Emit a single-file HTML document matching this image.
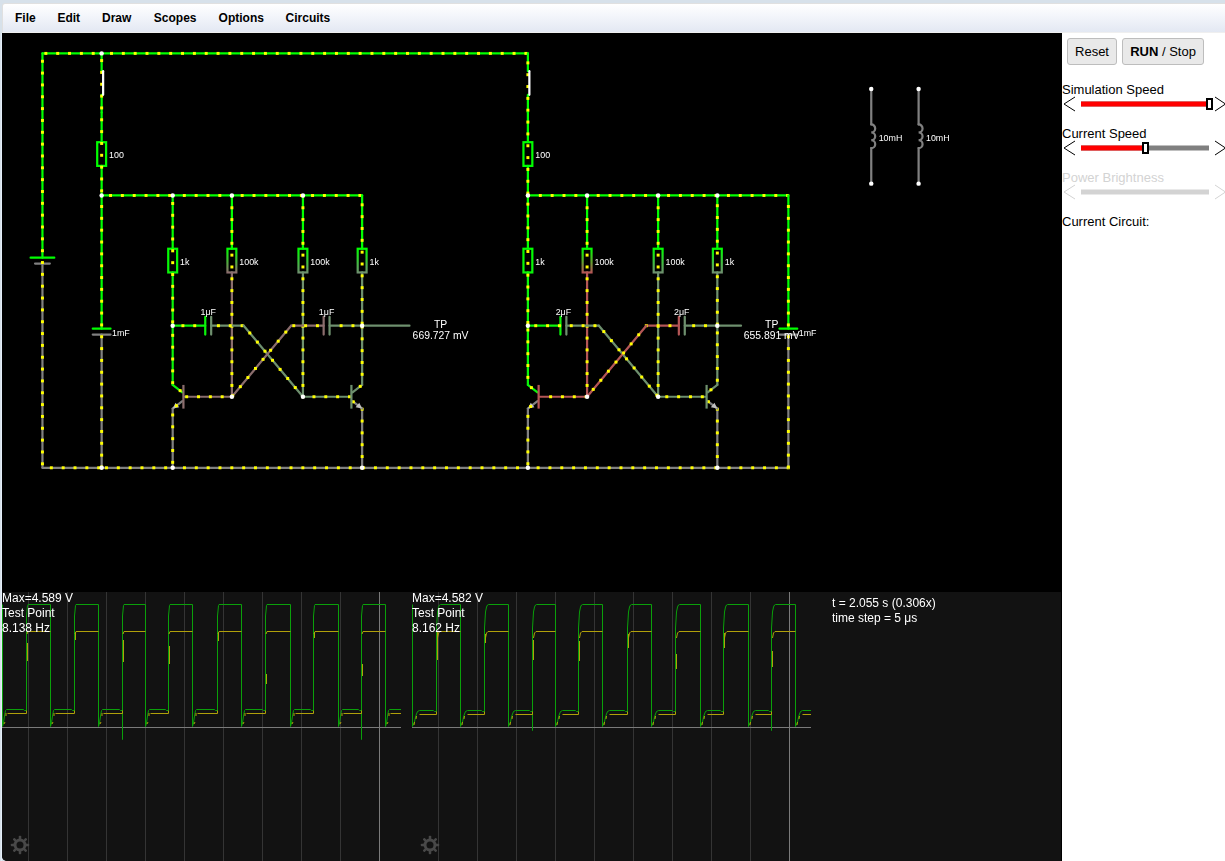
<!DOCTYPE html>
<html><head><meta charset="utf-8"><title>Circuit Simulator</title>
<style>
html,body{margin:0;padding:0}
body{width:1225px;height:861px;overflow:hidden;background:#d7e1ea;position:relative;font-family:"Liberation Sans",sans-serif;font-size:13px;color:#000}
#menubar{position:absolute;left:2px;top:3px;width:1230px;height:28px;border:1px solid #e0e0e0;border-bottom-color:#efefef;border-radius:3px 0 0 0;background:linear-gradient(#ffffff 0%,#f4f6fb 40%,#e3e8f3 100%);box-sizing:content-box}
#menubar span{position:absolute;top:0;line-height:28px;font-weight:bold;font-size:12px;white-space:nowrap}
#cv{position:absolute;left:2px;top:33px;width:1060px;height:828px;background:#000;border-radius:0 0 0 5px;overflow:hidden}
#scopebg{position:absolute;left:0;top:559px;width:1059px;height:269px;background:#121212}
#cv svg{position:absolute;left:0;top:0;will-change:transform}
#side{position:absolute;left:1062px;top:33px;width:163px;height:828px;background:#fff}
.btn{position:absolute;top:5px;height:27px;box-sizing:border-box;border:1px solid #bdbdbd;border-radius:3px;background:#e9e9e9;font-size:13px;line-height:25px;text-align:center;white-space:nowrap}
.lbl{position:absolute;left:0;white-space:nowrap;font-size:13px;line-height:15px}
#side svg{position:absolute;left:0;top:0}
</style></head><body>
<div id="menubar">
<span style="left:12px">File</span><span style="left:54.4px">Edit</span><span style="left:99px">Draw</span><span style="left:150.8px">Scopes</span><span style="left:215.6px">Options</span><span style="left:282.6px">Circuits</span>
</div>
<div style="position:absolute;left:1px;top:33px;width:1px;height:828px;background:#e4eef9"></div>
<div id="cv"><div id="scopebg"></div>
<svg width="1060" height="828" viewBox="2 33 1060 828">
<line x1="28.5" y1="592" x2="28.5" y2="861" stroke="#343434" stroke-width="1"/>
<line x1="67.5" y1="592" x2="67.5" y2="861" stroke="#343434" stroke-width="1"/>
<line x1="106.5" y1="592" x2="106.5" y2="861" stroke="#343434" stroke-width="1"/>
<line x1="145.5" y1="592" x2="145.5" y2="861" stroke="#343434" stroke-width="1"/>
<line x1="184.5" y1="592" x2="184.5" y2="861" stroke="#343434" stroke-width="1"/>
<line x1="223.5" y1="592" x2="223.5" y2="861" stroke="#343434" stroke-width="1"/>
<line x1="262.5" y1="592" x2="262.5" y2="861" stroke="#343434" stroke-width="1"/>
<line x1="301.5" y1="592" x2="301.5" y2="861" stroke="#343434" stroke-width="1"/>
<line x1="340.5" y1="592" x2="340.5" y2="861" stroke="#343434" stroke-width="1"/>
<line x1="379.5" y1="592" x2="379.5" y2="861" stroke="#7a7a7a" stroke-width="1"/>
<line x1="2" y1="727.5" x2="401" y2="727.5" stroke="#7a7a7a" stroke-width="1"/>
<path d="M2.5 604.5 L2.5 726.5 L3.5 723 L4.5 716 L5.5 710.5 L6.5 709.5 L23.5 709.5 L24.5 710.5 L26.5 710.5 L26.5 616 L27.5 605.5 L28 604.5 L50.5 604.5 L50.5 726.5 L51.5 723 L52.5 716 L53.5 710.5 L54.5 709.5 L71.5 709.5 L72.5 710.5 L74.5 710.5 L74.5 616 L75.5 605.5 L76 604.5 L98.5 604.5 L98.5 726.5 L99.5 723 L100.5 716 L101.5 710.5 L102.5 709.5 L119.5 709.5 L120.5 710.5 L122.5 710.5 L122.5 739.5 L122.5 616 L123.5 605.5 L124 604.5 L145.5 604.5 L145.5 726.5 L146.5 723 L147.5 716 L148.5 710.5 L149.5 709.5 L165.5 709.5 L166.5 710.5 L168.5 710.5 L168.5 616 L169.5 605.5 L170 604.5 L192.5 604.5 L192.5 726.5 L193.5 723 L194.5 716 L195.5 710.5 L196.5 709.5 L214.5 709.5 L215.5 710.5 L217.5 710.5 L217.5 616 L218.5 605.5 L219 604.5 L241.5 604.5 L241.5 726.5 L242.5 723 L243.5 716 L244.5 710.5 L245.5 709.5 L262.5 709.5 L263.5 710.5 L265.5 710.5 L265.5 616 L266.5 605.5 L267 604.5 L290.5 604.5 L290.5 726.5 L291.5 723 L292.5 716 L293.5 710.5 L294.5 709.5 L310.5 709.5 L311.5 710.5 L313.5 710.5 L313.5 616 L314.5 605.5 L315 604.5 L338.5 604.5 L338.5 726.5 L339.5 723 L340.5 716 L341.5 710.5 L342.5 709.5 L358.5 709.5 L359.5 710.5 L361.5 710.5 L361.5 739.5 L361.5 616 L362.5 605.5 L363 604.5 L385.5 604.5 L385.5 726.5 L386.5 723 L387.5 716 L388.5 710.5 L389.5 709.5 L401 709.5" fill="none" stroke="#0aa00a" stroke-width="1" stroke-linejoin="round"/>
<path d="M4 724 L5 722 M6 716 L6 713 M7.5 713.5 L26.5 713.5 M26.5 713.5 L26.5 710.5 M52 724 L53 722 M54 716 L54 713 M55.5 713.5 L74.5 713.5 M74.5 713.5 L74.5 710.5 M100 724 L101 722 M102 716 L102 713 M103.5 713.5 L122.5 713.5 M122.5 713.5 L122.5 710.5 M147 724 L148 722 M149 716 L149 713 M150.5 713.5 L168.5 713.5 M168.5 713.5 L168.5 710.5 M194 724 L195 722 M196 716 L196 713 M197.5 713.5 L217.5 713.5 M217.5 713.5 L217.5 710.5 M243 724 L244 722 M245 716 L245 713 M246.5 713.5 L265.5 713.5 M265.5 713.5 L265.5 710.5 M292 724 L293 722 M294 716 L294 713 M295.5 713.5 L313.5 713.5 M313.5 713.5 L313.5 710.5 M340 724 L341 722 M342 716 L342 713 M343.5 713.5 L361.5 713.5 M361.5 713.5 L361.5 710.5 M387 724 L388 722 M389 716 L389 713 M390.5 713.5 L401 713.5 M27.5 643 L27.5 661 M27 634 L28 631.5 L50.5 631.5 M75.5 632 L75.5 640 M75 634 L76 631.5 L98.5 631.5 M123.5 640 L123.5 662 M123 634 L124 631.5 L145.5 631.5 M169.5 646 L169.5 664 M169 634 L170 631.5 L192.5 631.5 M218.5 632 L218.5 641 M218 634 L219 631.5 L241.5 631.5 M266.5 674 L266.5 684 M266 634 L267 631.5 L290.5 631.5 M314.5 632 L314.5 638 M314 634 L315 631.5 L338.5 631.5 M362.5 664 L362.5 676 M362 634 L363 631.5 L385.5 631.5" fill="none" stroke="#b0a00a" stroke-width="1"/>
<line x1="438.5" y1="592" x2="438.5" y2="861" stroke="#343434" stroke-width="1"/>
<line x1="477.5" y1="592" x2="477.5" y2="861" stroke="#343434" stroke-width="1"/>
<line x1="516.5" y1="592" x2="516.5" y2="861" stroke="#343434" stroke-width="1"/>
<line x1="555.5" y1="592" x2="555.5" y2="861" stroke="#343434" stroke-width="1"/>
<line x1="594.5" y1="592" x2="594.5" y2="861" stroke="#343434" stroke-width="1"/>
<line x1="633.5" y1="592" x2="633.5" y2="861" stroke="#343434" stroke-width="1"/>
<line x1="672.5" y1="592" x2="672.5" y2="861" stroke="#343434" stroke-width="1"/>
<line x1="711.5" y1="592" x2="711.5" y2="861" stroke="#343434" stroke-width="1"/>
<line x1="750.5" y1="592" x2="750.5" y2="861" stroke="#343434" stroke-width="1"/>
<line x1="789.5" y1="592" x2="789.5" y2="861" stroke="#7a7a7a" stroke-width="1"/>
<line x1="412" y1="727.5" x2="811" y2="727.5" stroke="#7a7a7a" stroke-width="1"/>
<path d="M412.5 604.5 L412.5 726.5 L413.5 724 L414.5 722 L415.5 717 L416.5 714 L417.5 711.5 L419.5 710.5 L433.5 710.5 L434.5 711.5 L436.5 711.5 L436.5 628 L437.5 612 L438.5 607 L439.5 605 L440.5 604.5 L460.5 604.5 L460.5 726.5 L461.5 724 L462.5 722 L463.5 717 L464.5 714 L465.5 711.5 L467.5 710.5 L481.5 710.5 L482.5 711.5 L484.5 711.5 L484.5 628 L485.5 612 L486.5 607 L487.5 605 L488.5 604.5 L508.5 604.5 L508.5 726.5 L509.5 724 L510.5 722 L511.5 717 L512.5 714 L513.5 711.5 L515.5 710.5 L529.5 710.5 L530.5 711.5 L532.5 711.5 L532.5 730.5 L532.5 628 L533.5 612 L534.5 607 L535.5 605 L536.5 604.5 L555.5 604.5 L555.5 726.5 L556.5 724 L557.5 722 L558.5 717 L559.5 714 L560.5 711.5 L562.5 710.5 L575.5 710.5 L576.5 711.5 L578.5 711.5 L578.5 628 L579.5 612 L580.5 607 L581.5 605 L582.5 604.5 L602.5 604.5 L602.5 726.5 L603.5 724 L604.5 722 L605.5 717 L606.5 714 L607.5 711.5 L609.5 710.5 L624.5 710.5 L625.5 711.5 L627.5 711.5 L627.5 628 L628.5 612 L629.5 607 L630.5 605 L631.5 604.5 L651.5 604.5 L651.5 726.5 L652.5 724 L653.5 722 L654.5 717 L655.5 714 L656.5 711.5 L658.5 710.5 L672.5 710.5 L673.5 711.5 L675.5 711.5 L675.5 628 L676.5 612 L677.5 607 L678.5 605 L679.5 604.5 L700.5 604.5 L700.5 726.5 L701.5 724 L702.5 722 L703.5 717 L704.5 714 L705.5 711.5 L707.5 710.5 L720.5 710.5 L721.5 711.5 L723.5 711.5 L723.5 628 L724.5 612 L725.5 607 L726.5 605 L727.5 604.5 L748.5 604.5 L748.5 726.5 L749.5 724 L750.5 722 L751.5 717 L752.5 714 L753.5 711.5 L755.5 710.5 L768.5 710.5 L769.5 711.5 L771.5 711.5 L771.5 730.5 L771.5 628 L772.5 612 L773.5 607 L774.5 605 L775.5 604.5 L795.5 604.5 L795.5 726.5 L796.5 724 L797.5 722 L798.5 717 L799.5 714 L800.5 711.5 L802.5 710.5 L811 710.5" fill="none" stroke="#0aa00a" stroke-width="1" stroke-linejoin="round"/>
<path d="M414 725 L414.5 722 M416 719 L416.5 716 M419.5 714.5 L436.5 714.5 M436.5 714.5 L436.5 711.5 M462 725 L462.5 722 M464 719 L464.5 716 M467.5 714.5 L484.5 714.5 M484.5 714.5 L484.5 711.5 M510 725 L510.5 722 M512 719 L512.5 716 M515.5 714.5 L532.5 714.5 M532.5 714.5 L532.5 711.5 M557 725 L557.5 722 M559 719 L559.5 716 M562.5 714.5 L578.5 714.5 M578.5 714.5 L578.5 711.5 M604 725 L604.5 722 M606 719 L606.5 716 M609.5 714.5 L627.5 714.5 M627.5 714.5 L627.5 711.5 M653 725 L653.5 722 M655 719 L655.5 716 M658.5 714.5 L675.5 714.5 M675.5 714.5 L675.5 711.5 M702 725 L702.5 722 M704 719 L704.5 716 M707.5 714.5 L723.5 714.5 M723.5 714.5 L723.5 711.5 M750 725 L750.5 722 M752 719 L752.5 716 M755.5 714.5 L771.5 714.5 M771.5 714.5 L771.5 711.5 M797 725 L797.5 722 M799 719 L799.5 716 M802.5 714.5 L811 714.5 M437.5 632 L437.5 660 M437.5 638 L438.5 633 L440 631.5 L460.5 631.5 M485.5 634 L485.5 643 M485.5 638 L486.5 633 L488 631.5 L508.5 631.5 M533.5 640 L533.5 660 M533.5 638 L534.5 633 L536 631.5 L555.5 631.5 M579.5 641 L579.5 661 M579.5 638 L580.5 633 L582 631.5 L602.5 631.5 M628.5 634 L628.5 648 M628.5 638 L629.5 633 L631 631.5 L651.5 631.5 M676.5 654 L676.5 669 M676.5 638 L677.5 633 L679 631.5 L700.5 631.5 M724.5 633 L724.5 648 M724.5 638 L725.5 633 L727 631.5 L748.5 631.5 M772.5 651 L772.5 667 M772.5 638 L773.5 633 L775 631.5 L795.5 631.5" fill="none" stroke="#b0a00a" stroke-width="1"/>
<g transform="translate(20,845)" fill="#484848">
<rect x="-1.25" y="-9.2" width="2.5" height="4.4" rx="0.8" transform="rotate(0)"/>
<rect x="-1.25" y="-9.2" width="2.5" height="4.4" rx="0.8" transform="rotate(45)"/>
<rect x="-1.25" y="-9.2" width="2.5" height="4.4" rx="0.8" transform="rotate(90)"/>
<rect x="-1.25" y="-9.2" width="2.5" height="4.4" rx="0.8" transform="rotate(135)"/>
<rect x="-1.25" y="-9.2" width="2.5" height="4.4" rx="0.8" transform="rotate(180)"/>
<rect x="-1.25" y="-9.2" width="2.5" height="4.4" rx="0.8" transform="rotate(225)"/>
<rect x="-1.25" y="-9.2" width="2.5" height="4.4" rx="0.8" transform="rotate(270)"/>
<rect x="-1.25" y="-9.2" width="2.5" height="4.4" rx="0.8" transform="rotate(315)"/>
<circle r="5" fill="none" stroke="#484848" stroke-width="3"/>
</g>
<g transform="translate(430,845)" fill="#484848">
<rect x="-1.25" y="-9.2" width="2.5" height="4.4" rx="0.8" transform="rotate(0)"/>
<rect x="-1.25" y="-9.2" width="2.5" height="4.4" rx="0.8" transform="rotate(45)"/>
<rect x="-1.25" y="-9.2" width="2.5" height="4.4" rx="0.8" transform="rotate(90)"/>
<rect x="-1.25" y="-9.2" width="2.5" height="4.4" rx="0.8" transform="rotate(135)"/>
<rect x="-1.25" y="-9.2" width="2.5" height="4.4" rx="0.8" transform="rotate(180)"/>
<rect x="-1.25" y="-9.2" width="2.5" height="4.4" rx="0.8" transform="rotate(225)"/>
<rect x="-1.25" y="-9.2" width="2.5" height="4.4" rx="0.8" transform="rotate(270)"/>
<rect x="-1.25" y="-9.2" width="2.5" height="4.4" rx="0.8" transform="rotate(315)"/>
<circle r="5" fill="none" stroke="#484848" stroke-width="3"/>
</g>
<g fill="#fff" font-family="'Liberation Sans',sans-serif" font-size="12">
<text x="2" y="602">Max=4.589 V</text>
<text x="2" y="617">Test Point</text>
<text x="2" y="632">8.138 Hz</text>
<text x="412" y="602">Max=4.582 V</text>
<text x="412" y="617">Test Point</text>
<text x="412" y="632">8.162 Hz</text>
<text x="832" y="607">t = 2.055 s (0.306x)</text>
<text x="832" y="622">time step = 5 μs</text>
</g>
<g transform="translate(42.45,53.4) scale(0.74)">
<line x1="0" y1="560" x2="0" y2="284" stroke="#808080" stroke-width="3" stroke-linecap="round"/>
<line x1="0" y1="276" x2="0" y2="0" stroke="#00ff00" stroke-width="3" stroke-linecap="round"/>
<line x1="-10" y1="284" x2="10" y2="284" stroke="#808080" stroke-width="3" stroke-linecap="round"/>
<line x1="-16" y1="276" x2="16" y2="276" stroke="#00ff00" stroke-width="3" stroke-linecap="round"/>
<rect x="-2" y="8.6" width="4" height="4" fill="#ffff00"/>
<rect x="-2" y="24.6" width="4" height="4" fill="#ffff00"/>
<rect x="-2" y="40.6" width="4" height="4" fill="#ffff00"/>
<rect x="-2" y="56.6" width="4" height="4" fill="#ffff00"/>
<rect x="-2" y="72.6" width="4" height="4" fill="#ffff00"/>
<rect x="-2" y="88.6" width="4" height="4" fill="#ffff00"/>
<rect x="-2" y="104.6" width="4" height="4" fill="#ffff00"/>
<rect x="-2" y="120.6" width="4" height="4" fill="#ffff00"/>
<rect x="-2" y="136.6" width="4" height="4" fill="#ffff00"/>
<rect x="-2" y="152.6" width="4" height="4" fill="#ffff00"/>
<rect x="-2" y="168.6" width="4" height="4" fill="#ffff00"/>
<rect x="-2" y="184.6" width="4" height="4" fill="#ffff00"/>
<rect x="-2" y="200.6" width="4" height="4" fill="#ffff00"/>
<rect x="-2" y="216.6" width="4" height="4" fill="#ffff00"/>
<rect x="-2" y="232.6" width="4" height="4" fill="#ffff00"/>
<rect x="-2" y="248.6" width="4" height="4" fill="#ffff00"/>
<rect x="-2" y="264.6" width="4" height="4" fill="#ffff00"/>
<rect x="-2" y="280.6" width="4" height="4" fill="#ffff00"/>
<rect x="-2" y="296.6" width="4" height="4" fill="#ffff00"/>
<rect x="-2" y="312.6" width="4" height="4" fill="#ffff00"/>
<rect x="-2" y="328.6" width="4" height="4" fill="#ffff00"/>
<rect x="-2" y="344.6" width="4" height="4" fill="#ffff00"/>
<rect x="-2" y="360.6" width="4" height="4" fill="#ffff00"/>
<rect x="-2" y="376.6" width="4" height="4" fill="#ffff00"/>
<rect x="-2" y="392.6" width="4" height="4" fill="#ffff00"/>
<rect x="-2" y="408.6" width="4" height="4" fill="#ffff00"/>
<rect x="-2" y="424.6" width="4" height="4" fill="#ffff00"/>
<rect x="-2" y="440.6" width="4" height="4" fill="#ffff00"/>
<rect x="-2" y="456.6" width="4" height="4" fill="#ffff00"/>
<rect x="-2" y="472.6" width="4" height="4" fill="#ffff00"/>
<rect x="-2" y="488.6" width="4" height="4" fill="#ffff00"/>
<rect x="-2" y="504.6" width="4" height="4" fill="#ffff00"/>
<rect x="-2" y="520.6" width="4" height="4" fill="#ffff00"/>
<rect x="-2" y="536.6" width="4" height="4" fill="#ffff00"/>
<rect x="-2" y="552.6" width="4" height="4" fill="#ffff00"/>
<line x1="0" y1="0" x2="80" y2="0" stroke="#00ff00" stroke-width="3" stroke-linecap="round"/>
<line x1="80" y1="0" x2="656" y2="0" stroke="#00ff00" stroke-width="3" stroke-linecap="round"/>
<rect x="2.6" y="-2" width="4" height="4" fill="#ffff00"/>
<rect x="18.6" y="-2" width="4" height="4" fill="#ffff00"/>
<rect x="34.6" y="-2" width="4" height="4" fill="#ffff00"/>
<rect x="50.6" y="-2" width="4" height="4" fill="#ffff00"/>
<rect x="66.6" y="-2" width="4" height="4" fill="#ffff00"/>
<rect x="91.3" y="-2" width="4" height="4" fill="#ffff00"/>
<rect x="107.3" y="-2" width="4" height="4" fill="#ffff00"/>
<rect x="123.3" y="-2" width="4" height="4" fill="#ffff00"/>
<rect x="139.3" y="-2" width="4" height="4" fill="#ffff00"/>
<rect x="155.3" y="-2" width="4" height="4" fill="#ffff00"/>
<rect x="171.3" y="-2" width="4" height="4" fill="#ffff00"/>
<rect x="187.3" y="-2" width="4" height="4" fill="#ffff00"/>
<rect x="203.3" y="-2" width="4" height="4" fill="#ffff00"/>
<rect x="219.3" y="-2" width="4" height="4" fill="#ffff00"/>
<rect x="235.3" y="-2" width="4" height="4" fill="#ffff00"/>
<rect x="251.3" y="-2" width="4" height="4" fill="#ffff00"/>
<rect x="267.3" y="-2" width="4" height="4" fill="#ffff00"/>
<rect x="283.3" y="-2" width="4" height="4" fill="#ffff00"/>
<rect x="299.3" y="-2" width="4" height="4" fill="#ffff00"/>
<rect x="315.3" y="-2" width="4" height="4" fill="#ffff00"/>
<rect x="331.3" y="-2" width="4" height="4" fill="#ffff00"/>
<rect x="347.3" y="-2" width="4" height="4" fill="#ffff00"/>
<rect x="363.3" y="-2" width="4" height="4" fill="#ffff00"/>
<rect x="379.3" y="-2" width="4" height="4" fill="#ffff00"/>
<rect x="395.3" y="-2" width="4" height="4" fill="#ffff00"/>
<rect x="411.3" y="-2" width="4" height="4" fill="#ffff00"/>
<rect x="427.3" y="-2" width="4" height="4" fill="#ffff00"/>
<rect x="443.3" y="-2" width="4" height="4" fill="#ffff00"/>
<rect x="459.3" y="-2" width="4" height="4" fill="#ffff00"/>
<rect x="475.3" y="-2" width="4" height="4" fill="#ffff00"/>
<rect x="491.3" y="-2" width="4" height="4" fill="#ffff00"/>
<rect x="507.3" y="-2" width="4" height="4" fill="#ffff00"/>
<rect x="523.3" y="-2" width="4" height="4" fill="#ffff00"/>
<rect x="539.3" y="-2" width="4" height="4" fill="#ffff00"/>
<rect x="555.3" y="-2" width="4" height="4" fill="#ffff00"/>
<rect x="571.3" y="-2" width="4" height="4" fill="#ffff00"/>
<rect x="587.3" y="-2" width="4" height="4" fill="#ffff00"/>
<rect x="603.3" y="-2" width="4" height="4" fill="#ffff00"/>
<rect x="619.3" y="-2" width="4" height="4" fill="#ffff00"/>
<rect x="635.3" y="-2" width="4" height="4" fill="#ffff00"/>
<rect x="651.3" y="-2" width="4" height="4" fill="#ffff00"/>
<line x1="80" y1="0" x2="80" y2="24" stroke="#00ff00" stroke-width="3" stroke-linecap="round"/>
<line x1="80" y1="56" x2="80" y2="80" stroke="#00ff00" stroke-width="3" stroke-linecap="round"/>
<rect x="78" y="7.7" width="4" height="4" fill="#ffff00"/>
<rect x="78" y="23.7" width="4" height="4" fill="#ffff00"/>
<rect x="78" y="39.7" width="4" height="4" fill="#ffff00"/>
<rect x="78" y="55.7" width="4" height="4" fill="#ffff00"/>
<rect x="78" y="71.7" width="4" height="4" fill="#ffff00"/>
<line x1="82" y1="24" x2="82" y2="56" stroke="#ffffff" stroke-width="3" stroke-linecap="round"/>
<line x1="80" y1="80" x2="80" y2="120" stroke="#00ff00" stroke-width="3" stroke-linecap="round"/>
<line x1="80" y1="152" x2="80" y2="192" stroke="#00ff00" stroke-width="3" stroke-linecap="round"/>
<linearGradient id="g92" gradientUnits="userSpaceOnUse" x1="0" y1="120" x2="0" y2="152"><stop offset="0" stop-color="#00ff00"/><stop offset="1" stop-color="#00ff00"/></linearGradient>
<rect x="74" y="120" width="12" height="32" fill="none" stroke="url(#g92)" stroke-width="3"/>
<rect x="78" y="87.7" width="4" height="4" fill="#ffff00"/>
<rect x="78" y="103.7" width="4" height="4" fill="#ffff00"/>
<rect x="78" y="119.7" width="4" height="4" fill="#ffff00"/>
<rect x="78" y="135.7" width="4" height="4" fill="#ffff00"/>
<rect x="78" y="151.7" width="4" height="4" fill="#ffff00"/>
<rect x="78" y="167.7" width="4" height="4" fill="#ffff00"/>
<rect x="78" y="183.7" width="4" height="4" fill="#ffff00"/>
<line x1="656" y1="0" x2="656" y2="24" stroke="#00ff00" stroke-width="3" stroke-linecap="round"/>
<line x1="656" y1="56" x2="656" y2="80" stroke="#00ff00" stroke-width="3" stroke-linecap="round"/>
<rect x="654" y="10.8" width="4" height="4" fill="#ffff00"/>
<rect x="654" y="26.8" width="4" height="4" fill="#ffff00"/>
<rect x="654" y="42.8" width="4" height="4" fill="#ffff00"/>
<rect x="654" y="58.8" width="4" height="4" fill="#ffff00"/>
<rect x="654" y="74.8" width="4" height="4" fill="#ffff00"/>
<line x1="658" y1="24" x2="658" y2="56" stroke="#ffffff" stroke-width="3" stroke-linecap="round"/>
<line x1="656" y1="80" x2="656" y2="120" stroke="#00ff00" stroke-width="3" stroke-linecap="round"/>
<line x1="656" y1="152" x2="656" y2="192" stroke="#00ff00" stroke-width="3" stroke-linecap="round"/>
<linearGradient id="g111" gradientUnits="userSpaceOnUse" x1="0" y1="120" x2="0" y2="152"><stop offset="0" stop-color="#00ff00"/><stop offset="1" stop-color="#00ff00"/></linearGradient>
<rect x="650" y="120" width="12" height="32" fill="none" stroke="url(#g111)" stroke-width="3"/>
<rect x="654" y="90.8" width="4" height="4" fill="#ffff00"/>
<rect x="654" y="106.8" width="4" height="4" fill="#ffff00"/>
<rect x="654" y="122.8" width="4" height="4" fill="#ffff00"/>
<rect x="654" y="138.8" width="4" height="4" fill="#ffff00"/>
<rect x="654" y="154.8" width="4" height="4" fill="#ffff00"/>
<rect x="654" y="170.8" width="4" height="4" fill="#ffff00"/>
<rect x="654" y="186.8" width="4" height="4" fill="#ffff00"/>
<line x1="80" y1="192" x2="176" y2="192" stroke="#00ff00" stroke-width="3" stroke-linecap="round"/>
<line x1="176" y1="192" x2="256" y2="192" stroke="#00ff00" stroke-width="3" stroke-linecap="round"/>
<line x1="256" y1="192" x2="352" y2="192" stroke="#00ff00" stroke-width="3" stroke-linecap="round"/>
<line x1="352" y1="192" x2="432" y2="192" stroke="#00ff00" stroke-width="3" stroke-linecap="round"/>
<rect x="90" y="190" width="4" height="4" fill="#ffff00"/>
<rect x="106" y="190" width="4" height="4" fill="#ffff00"/>
<rect x="122" y="190" width="4" height="4" fill="#ffff00"/>
<rect x="138" y="190" width="4" height="4" fill="#ffff00"/>
<rect x="154" y="190" width="4" height="4" fill="#ffff00"/>
<rect x="170" y="190" width="4" height="4" fill="#ffff00"/>
<rect x="189.7" y="190" width="4" height="4" fill="#ffff00"/>
<rect x="205.7" y="190" width="4" height="4" fill="#ffff00"/>
<rect x="221.7" y="190" width="4" height="4" fill="#ffff00"/>
<rect x="237.7" y="190" width="4" height="4" fill="#ffff00"/>
<rect x="253.7" y="190" width="4" height="4" fill="#ffff00"/>
<rect x="267.9" y="190" width="4" height="4" fill="#ffff00"/>
<rect x="283.9" y="190" width="4" height="4" fill="#ffff00"/>
<rect x="299.9" y="190" width="4" height="4" fill="#ffff00"/>
<rect x="315.9" y="190" width="4" height="4" fill="#ffff00"/>
<rect x="331.9" y="190" width="4" height="4" fill="#ffff00"/>
<rect x="347.9" y="190" width="4" height="4" fill="#ffff00"/>
<rect x="363" y="190" width="4" height="4" fill="#ffff00"/>
<rect x="379" y="190" width="4" height="4" fill="#ffff00"/>
<rect x="395" y="190" width="4" height="4" fill="#ffff00"/>
<rect x="411" y="190" width="4" height="4" fill="#ffff00"/>
<rect x="427" y="190" width="4" height="4" fill="#ffff00"/>
<line x1="80" y1="192" x2="80" y2="372" stroke="#00ff00" stroke-width="3" stroke-linecap="round"/>
<line x1="80" y1="380" x2="80" y2="560" stroke="#808080" stroke-width="3" stroke-linecap="round"/>
<line x1="68" y1="372" x2="92" y2="372" stroke="#00ff00" stroke-width="3" stroke-linecap="round"/>
<line x1="68" y1="380" x2="92" y2="380" stroke="#808080" stroke-width="3" stroke-linecap="round"/>
<rect x="78" y="204.9" width="4" height="4" fill="#ffff00"/>
<rect x="78" y="220.9" width="4" height="4" fill="#ffff00"/>
<rect x="78" y="236.9" width="4" height="4" fill="#ffff00"/>
<rect x="78" y="252.9" width="4" height="4" fill="#ffff00"/>
<rect x="78" y="268.9" width="4" height="4" fill="#ffff00"/>
<rect x="78" y="284.9" width="4" height="4" fill="#ffff00"/>
<rect x="78" y="300.9" width="4" height="4" fill="#ffff00"/>
<rect x="78" y="316.9" width="4" height="4" fill="#ffff00"/>
<rect x="78" y="332.9" width="4" height="4" fill="#ffff00"/>
<rect x="78" y="348.9" width="4" height="4" fill="#ffff00"/>
<rect x="78" y="364.9" width="4" height="4" fill="#ffff00"/>
<rect x="78" y="556.9" width="4" height="4" fill="#ffff00"/>
<rect x="78" y="540.9" width="4" height="4" fill="#ffff00"/>
<rect x="78" y="524.9" width="4" height="4" fill="#ffff00"/>
<rect x="78" y="508.9" width="4" height="4" fill="#ffff00"/>
<rect x="78" y="492.9" width="4" height="4" fill="#ffff00"/>
<rect x="78" y="476.9" width="4" height="4" fill="#ffff00"/>
<rect x="78" y="460.9" width="4" height="4" fill="#ffff00"/>
<rect x="78" y="444.9" width="4" height="4" fill="#ffff00"/>
<rect x="78" y="428.9" width="4" height="4" fill="#ffff00"/>
<rect x="78" y="412.9" width="4" height="4" fill="#ffff00"/>
<rect x="78" y="396.9" width="4" height="4" fill="#ffff00"/>
<rect x="78" y="380.9" width="4" height="4" fill="#ffff00"/>
<line x1="176" y1="192" x2="176" y2="264" stroke="#00ff00" stroke-width="3" stroke-linecap="round"/>
<line x1="176" y1="296" x2="176" y2="368" stroke="#0af40a" stroke-width="3" stroke-linecap="round"/>
<linearGradient id="g175" gradientUnits="userSpaceOnUse" x1="0" y1="264" x2="0" y2="296"><stop offset="0" stop-color="#00ff00"/><stop offset="1" stop-color="#0af40a"/></linearGradient>
<rect x="170" y="264" width="12" height="32" fill="none" stroke="url(#g175)" stroke-width="3"/>
<line x1="256" y1="192" x2="256" y2="264" stroke="#00ff00" stroke-width="3" stroke-linecap="round"/>
<line x1="256" y1="296" x2="256" y2="368" stroke="#8b6d6d" stroke-width="3" stroke-linecap="round"/>
<linearGradient id="g179" gradientUnits="userSpaceOnUse" x1="0" y1="264" x2="0" y2="296"><stop offset="0" stop-color="#00ff00"/><stop offset="1" stop-color="#8b6d6d"/></linearGradient>
<rect x="250" y="264" width="12" height="32" fill="none" stroke="url(#g179)" stroke-width="3"/>
<line x1="352" y1="192" x2="352" y2="264" stroke="#00ff00" stroke-width="3" stroke-linecap="round"/>
<line x1="352" y1="296" x2="352" y2="368" stroke="#6e906e" stroke-width="3" stroke-linecap="round"/>
<linearGradient id="g183" gradientUnits="userSpaceOnUse" x1="0" y1="264" x2="0" y2="296"><stop offset="0" stop-color="#00ff00"/><stop offset="1" stop-color="#6e906e"/></linearGradient>
<rect x="346" y="264" width="12" height="32" fill="none" stroke="url(#g183)" stroke-width="3"/>
<line x1="432" y1="192" x2="432" y2="264" stroke="#00ff00" stroke-width="3" stroke-linecap="round"/>
<line x1="432" y1="296" x2="432" y2="368" stroke="#6e906e" stroke-width="3" stroke-linecap="round"/>
<linearGradient id="g187" gradientUnits="userSpaceOnUse" x1="0" y1="264" x2="0" y2="296"><stop offset="0" stop-color="#00ff00"/><stop offset="1" stop-color="#6e906e"/></linearGradient>
<rect x="426" y="264" width="12" height="32" fill="none" stroke="url(#g187)" stroke-width="3"/>
<rect x="174" y="200.8" width="4" height="4" fill="#ffff00"/>
<rect x="174" y="216.8" width="4" height="4" fill="#ffff00"/>
<rect x="174" y="232.8" width="4" height="4" fill="#ffff00"/>
<rect x="174" y="248.8" width="4" height="4" fill="#ffff00"/>
<rect x="174" y="264.8" width="4" height="4" fill="#ffff00"/>
<rect x="174" y="280.8" width="4" height="4" fill="#ffff00"/>
<rect x="174" y="296.8" width="4" height="4" fill="#ffff00"/>
<rect x="174" y="312.8" width="4" height="4" fill="#ffff00"/>
<rect x="174" y="328.8" width="4" height="4" fill="#ffff00"/>
<rect x="174" y="344.8" width="4" height="4" fill="#ffff00"/>
<rect x="174" y="360.8" width="4" height="4" fill="#ffff00"/>
<rect x="254" y="190.6" width="4" height="4" fill="#ffff00"/>
<rect x="254" y="206.6" width="4" height="4" fill="#ffff00"/>
<rect x="254" y="222.6" width="4" height="4" fill="#ffff00"/>
<rect x="254" y="238.6" width="4" height="4" fill="#ffff00"/>
<rect x="254" y="254.6" width="4" height="4" fill="#ffff00"/>
<rect x="254" y="270.6" width="4" height="4" fill="#ffff00"/>
<rect x="254" y="286.6" width="4" height="4" fill="#ffff00"/>
<rect x="254" y="302.6" width="4" height="4" fill="#ffff00"/>
<rect x="254" y="318.6" width="4" height="4" fill="#ffff00"/>
<rect x="254" y="334.6" width="4" height="4" fill="#ffff00"/>
<rect x="254" y="350.6" width="4" height="4" fill="#ffff00"/>
<rect x="350" y="190.6" width="4" height="4" fill="#ffff00"/>
<rect x="350" y="206.6" width="4" height="4" fill="#ffff00"/>
<rect x="350" y="222.6" width="4" height="4" fill="#ffff00"/>
<rect x="350" y="238.6" width="4" height="4" fill="#ffff00"/>
<rect x="350" y="254.6" width="4" height="4" fill="#ffff00"/>
<rect x="350" y="270.6" width="4" height="4" fill="#ffff00"/>
<rect x="350" y="286.6" width="4" height="4" fill="#ffff00"/>
<rect x="350" y="302.6" width="4" height="4" fill="#ffff00"/>
<rect x="350" y="318.6" width="4" height="4" fill="#ffff00"/>
<rect x="350" y="334.6" width="4" height="4" fill="#ffff00"/>
<rect x="350" y="350.6" width="4" height="4" fill="#ffff00"/>
<rect x="430" y="202.6" width="4" height="4" fill="#ffff00"/>
<rect x="430" y="218.6" width="4" height="4" fill="#ffff00"/>
<rect x="430" y="234.6" width="4" height="4" fill="#ffff00"/>
<rect x="430" y="250.6" width="4" height="4" fill="#ffff00"/>
<rect x="430" y="266.6" width="4" height="4" fill="#ffff00"/>
<rect x="430" y="282.6" width="4" height="4" fill="#ffff00"/>
<rect x="430" y="298.6" width="4" height="4" fill="#ffff00"/>
<rect x="430" y="314.6" width="4" height="4" fill="#ffff00"/>
<rect x="430" y="330.6" width="4" height="4" fill="#ffff00"/>
<rect x="430" y="346.6" width="4" height="4" fill="#ffff00"/>
<rect x="430" y="362.6" width="4" height="4" fill="#ffff00"/>
<line x1="256" y1="368" x2="256" y2="464" stroke="#8b6d6d" stroke-width="3" stroke-linecap="round"/>
<line x1="352" y1="368" x2="352" y2="464" stroke="#6e906e" stroke-width="3" stroke-linecap="round"/>
<rect x="254" y="366.7" width="4" height="4" fill="#ffff00"/>
<rect x="254" y="382.7" width="4" height="4" fill="#ffff00"/>
<rect x="254" y="398.7" width="4" height="4" fill="#ffff00"/>
<rect x="254" y="414.7" width="4" height="4" fill="#ffff00"/>
<rect x="254" y="430.7" width="4" height="4" fill="#ffff00"/>
<rect x="254" y="446.7" width="4" height="4" fill="#ffff00"/>
<rect x="350" y="366.7" width="4" height="4" fill="#ffff00"/>
<rect x="350" y="382.7" width="4" height="4" fill="#ffff00"/>
<rect x="350" y="398.7" width="4" height="4" fill="#ffff00"/>
<rect x="350" y="414.7" width="4" height="4" fill="#ffff00"/>
<rect x="350" y="430.7" width="4" height="4" fill="#ffff00"/>
<rect x="350" y="446.7" width="4" height="4" fill="#ffff00"/>
<line x1="176" y1="368" x2="220" y2="368" stroke="#0af40a" stroke-width="3" stroke-linecap="round"/>
<line x1="228" y1="368" x2="272" y2="368" stroke="#6e906e" stroke-width="3" stroke-linecap="round"/>
<line x1="220" y1="380" x2="220" y2="356" stroke="#0af40a" stroke-width="3" stroke-linecap="round"/>
<line x1="228" y1="380" x2="228" y2="356" stroke="#6e906e" stroke-width="3" stroke-linecap="round"/>
<rect x="187.8" y="366" width="4" height="4" fill="#ffff00"/>
<rect x="203.8" y="366" width="4" height="4" fill="#ffff00"/>
<rect x="267.8" y="366" width="4" height="4" fill="#ffff00"/>
<rect x="251.8" y="366" width="4" height="4" fill="#ffff00"/>
<rect x="235.8" y="366" width="4" height="4" fill="#ffff00"/>
<line x1="336" y1="368" x2="380" y2="368" stroke="#8b6d6d" stroke-width="3" stroke-linecap="round"/>
<line x1="388" y1="368" x2="432" y2="368" stroke="#6e906e" stroke-width="3" stroke-linecap="round"/>
<line x1="380" y1="380" x2="380" y2="356" stroke="#8b6d6d" stroke-width="3" stroke-linecap="round"/>
<line x1="388" y1="380" x2="388" y2="356" stroke="#6e906e" stroke-width="3" stroke-linecap="round"/>
<rect x="337.6" y="366" width="4" height="4" fill="#ffff00"/>
<rect x="353.6" y="366" width="4" height="4" fill="#ffff00"/>
<rect x="369.6" y="366" width="4" height="4" fill="#ffff00"/>
<rect x="417.6" y="366" width="4" height="4" fill="#ffff00"/>
<rect x="401.6" y="366" width="4" height="4" fill="#ffff00"/>
<line x1="272" y1="368" x2="352" y2="464" stroke="#6e906e" stroke-width="3" stroke-linecap="round"/>
<rect x="278.19" y="375.83" width="4" height="4" fill="#ffff00"/>
<rect x="288.44" y="388.12" width="4" height="4" fill="#ffff00"/>
<rect x="298.68" y="400.42" width="4" height="4" fill="#ffff00"/>
<rect x="308.92" y="412.71" width="4" height="4" fill="#ffff00"/>
<rect x="319.17" y="425" width="4" height="4" fill="#ffff00"/>
<rect x="329.41" y="437.29" width="4" height="4" fill="#ffff00"/>
<rect x="339.65" y="449.58" width="4" height="4" fill="#ffff00"/>
<rect x="349.9" y="461.87" width="4" height="4" fill="#ffff00"/>
<line x1="256" y1="464" x2="336" y2="368" stroke="#8b6d6d" stroke-width="3" stroke-linecap="round"/>
<rect x="255.15" y="460.62" width="4" height="4" fill="#ffff00"/>
<rect x="265.4" y="448.33" width="4" height="4" fill="#ffff00"/>
<rect x="275.64" y="436.03" width="4" height="4" fill="#ffff00"/>
<rect x="285.88" y="423.74" width="4" height="4" fill="#ffff00"/>
<rect x="296.12" y="411.45" width="4" height="4" fill="#ffff00"/>
<rect x="306.37" y="399.16" width="4" height="4" fill="#ffff00"/>
<rect x="316.61" y="386.87" width="4" height="4" fill="#ffff00"/>
<rect x="326.85" y="374.58" width="4" height="4" fill="#ffff00"/>
<line x1="176" y1="368" x2="176" y2="448" stroke="#0af40a" stroke-width="3" stroke-linecap="round"/>
<line x1="432" y1="368" x2="432" y2="448" stroke="#6e906e" stroke-width="3" stroke-linecap="round"/>
<line x1="176" y1="480" x2="176" y2="560" stroke="#808080" stroke-width="3" stroke-linecap="round"/>
<line x1="432" y1="480" x2="432" y2="560" stroke="#808080" stroke-width="3" stroke-linecap="round"/>
<rect x="174" y="379" width="4" height="4" fill="#ffff00"/>
<rect x="174" y="395" width="4" height="4" fill="#ffff00"/>
<rect x="174" y="411" width="4" height="4" fill="#ffff00"/>
<rect x="174" y="427" width="4" height="4" fill="#ffff00"/>
<rect x="174" y="443" width="4" height="4" fill="#ffff00"/>
<rect x="430" y="367.7" width="4" height="4" fill="#ffff00"/>
<rect x="430" y="383.7" width="4" height="4" fill="#ffff00"/>
<rect x="430" y="399.7" width="4" height="4" fill="#ffff00"/>
<rect x="430" y="415.7" width="4" height="4" fill="#ffff00"/>
<rect x="430" y="431.7" width="4" height="4" fill="#ffff00"/>
<rect x="174" y="486.6" width="4" height="4" fill="#ffff00"/>
<rect x="174" y="502.6" width="4" height="4" fill="#ffff00"/>
<rect x="174" y="518.6" width="4" height="4" fill="#ffff00"/>
<rect x="174" y="534.6" width="4" height="4" fill="#ffff00"/>
<rect x="174" y="550.6" width="4" height="4" fill="#ffff00"/>
<rect x="430" y="478.8" width="4" height="4" fill="#ffff00"/>
<rect x="430" y="494.8" width="4" height="4" fill="#ffff00"/>
<rect x="430" y="510.8" width="4" height="4" fill="#ffff00"/>
<rect x="430" y="526.8" width="4" height="4" fill="#ffff00"/>
<rect x="430" y="542.8" width="4" height="4" fill="#ffff00"/>
<line x1="176" y1="448" x2="189" y2="458" stroke="#0af40a" stroke-width="3" stroke-linecap="round"/>
<line x1="176" y1="480" x2="189" y2="470" stroke="#808080" stroke-width="3" stroke-linecap="round"/>
<polygon points="176,480 179.9,471.95 184.78,478.29" fill="#c0c0c0"/>
<line x1="256" y1="464" x2="192" y2="464" stroke="#8b6d6d" stroke-width="3" stroke-linecap="round"/>
<rect x="240.9" y="462" width="4" height="4" fill="#ffff00"/>
<rect x="224.9" y="462" width="4" height="4" fill="#ffff00"/>
<rect x="208.9" y="462" width="4" height="4" fill="#ffff00"/>
<rect x="192.9" y="462" width="4" height="4" fill="#ffff00"/>
<rect x="184.07" y="453.74" width="4" height="4" fill="#ffff00"/>
<rect x="179.07" y="474.1" width="4" height="4" fill="#ffff00"/>
<rect x="189" y="448" width="3" height="32" fill="#8b6d6d"/>
<line x1="432" y1="448" x2="419" y2="458" stroke="#6e906e" stroke-width="3" stroke-linecap="round"/>
<line x1="432" y1="480" x2="419" y2="470" stroke="#808080" stroke-width="3" stroke-linecap="round"/>
<polygon points="432,480 423.22,478.29 428.1,471.95" fill="#c0c0c0"/>
<line x1="352" y1="464" x2="416" y2="464" stroke="#6e906e" stroke-width="3" stroke-linecap="round"/>
<rect x="364.9" y="462" width="4" height="4" fill="#ffff00"/>
<rect x="380.9" y="462" width="4" height="4" fill="#ffff00"/>
<rect x="396.9" y="462" width="4" height="4" fill="#ffff00"/>
<rect x="412.9" y="462" width="4" height="4" fill="#ffff00"/>
<rect x="427.46" y="447.95" width="4" height="4" fill="#ffff00"/>
<rect x="418.11" y="468.85" width="4" height="4" fill="#ffff00"/>
<rect x="416" y="448" width="3" height="32" fill="#6e906e"/>
<line x1="432" y1="368" x2="496" y2="368" stroke="#6e906e" stroke-width="3" stroke-linecap="round"/>
<line x1="0" y1="560" x2="80" y2="560" stroke="#808080" stroke-width="3" stroke-linecap="round"/>
<line x1="80" y1="560" x2="176" y2="560" stroke="#808080" stroke-width="3" stroke-linecap="round"/>
<line x1="176" y1="560" x2="432" y2="560" stroke="#808080" stroke-width="3" stroke-linecap="round"/>
<line x1="432" y1="560" x2="656" y2="560" stroke="#808080" stroke-width="3" stroke-linecap="round"/>
<line x1="656" y1="560" x2="912" y2="560" stroke="#808080" stroke-width="3" stroke-linecap="round"/>
<line x1="912" y1="560" x2="1008" y2="560" stroke="#808080" stroke-width="3" stroke-linecap="round"/>
<rect x="10" y="558" width="4" height="4" fill="#ffff00"/>
<rect x="26" y="558" width="4" height="4" fill="#ffff00"/>
<rect x="42" y="558" width="4" height="4" fill="#ffff00"/>
<rect x="58" y="558" width="4" height="4" fill="#ffff00"/>
<rect x="74" y="558" width="4" height="4" fill="#ffff00"/>
<rect x="84.5" y="558" width="4" height="4" fill="#ffff00"/>
<rect x="100.5" y="558" width="4" height="4" fill="#ffff00"/>
<rect x="116.5" y="558" width="4" height="4" fill="#ffff00"/>
<rect x="132.5" y="558" width="4" height="4" fill="#ffff00"/>
<rect x="148.5" y="558" width="4" height="4" fill="#ffff00"/>
<rect x="164.5" y="558" width="4" height="4" fill="#ffff00"/>
<rect x="189.9" y="558" width="4" height="4" fill="#ffff00"/>
<rect x="205.9" y="558" width="4" height="4" fill="#ffff00"/>
<rect x="221.9" y="558" width="4" height="4" fill="#ffff00"/>
<rect x="237.9" y="558" width="4" height="4" fill="#ffff00"/>
<rect x="253.9" y="558" width="4" height="4" fill="#ffff00"/>
<rect x="269.9" y="558" width="4" height="4" fill="#ffff00"/>
<rect x="285.9" y="558" width="4" height="4" fill="#ffff00"/>
<rect x="301.9" y="558" width="4" height="4" fill="#ffff00"/>
<rect x="317.9" y="558" width="4" height="4" fill="#ffff00"/>
<rect x="333.9" y="558" width="4" height="4" fill="#ffff00"/>
<rect x="349.9" y="558" width="4" height="4" fill="#ffff00"/>
<rect x="365.9" y="558" width="4" height="4" fill="#ffff00"/>
<rect x="381.9" y="558" width="4" height="4" fill="#ffff00"/>
<rect x="397.9" y="558" width="4" height="4" fill="#ffff00"/>
<rect x="413.9" y="558" width="4" height="4" fill="#ffff00"/>
<rect x="429.9" y="558" width="4" height="4" fill="#ffff00"/>
<rect x="432" y="558" width="4" height="4" fill="#ffff00"/>
<rect x="448" y="558" width="4" height="4" fill="#ffff00"/>
<rect x="464" y="558" width="4" height="4" fill="#ffff00"/>
<rect x="480" y="558" width="4" height="4" fill="#ffff00"/>
<rect x="496" y="558" width="4" height="4" fill="#ffff00"/>
<rect x="512" y="558" width="4" height="4" fill="#ffff00"/>
<rect x="528" y="558" width="4" height="4" fill="#ffff00"/>
<rect x="544" y="558" width="4" height="4" fill="#ffff00"/>
<rect x="560" y="558" width="4" height="4" fill="#ffff00"/>
<rect x="576" y="558" width="4" height="4" fill="#ffff00"/>
<rect x="592" y="558" width="4" height="4" fill="#ffff00"/>
<rect x="608" y="558" width="4" height="4" fill="#ffff00"/>
<rect x="624" y="558" width="4" height="4" fill="#ffff00"/>
<rect x="640" y="558" width="4" height="4" fill="#ffff00"/>
<rect x="667.8" y="558" width="4" height="4" fill="#ffff00"/>
<rect x="683.8" y="558" width="4" height="4" fill="#ffff00"/>
<rect x="699.8" y="558" width="4" height="4" fill="#ffff00"/>
<rect x="715.8" y="558" width="4" height="4" fill="#ffff00"/>
<rect x="731.8" y="558" width="4" height="4" fill="#ffff00"/>
<rect x="747.8" y="558" width="4" height="4" fill="#ffff00"/>
<rect x="763.8" y="558" width="4" height="4" fill="#ffff00"/>
<rect x="779.8" y="558" width="4" height="4" fill="#ffff00"/>
<rect x="795.8" y="558" width="4" height="4" fill="#ffff00"/>
<rect x="811.8" y="558" width="4" height="4" fill="#ffff00"/>
<rect x="827.8" y="558" width="4" height="4" fill="#ffff00"/>
<rect x="843.8" y="558" width="4" height="4" fill="#ffff00"/>
<rect x="859.8" y="558" width="4" height="4" fill="#ffff00"/>
<rect x="875.8" y="558" width="4" height="4" fill="#ffff00"/>
<rect x="891.8" y="558" width="4" height="4" fill="#ffff00"/>
<rect x="907.8" y="558" width="4" height="4" fill="#ffff00"/>
<rect x="925.8" y="558" width="4" height="4" fill="#ffff00"/>
<rect x="941.8" y="558" width="4" height="4" fill="#ffff00"/>
<rect x="957.8" y="558" width="4" height="4" fill="#ffff00"/>
<rect x="973.8" y="558" width="4" height="4" fill="#ffff00"/>
<rect x="989.8" y="558" width="4" height="4" fill="#ffff00"/>
<rect x="1005.8" y="558" width="4" height="4" fill="#ffff00"/>
<line x1="656" y1="192" x2="736" y2="192" stroke="#00ff00" stroke-width="3" stroke-linecap="round"/>
<line x1="736" y1="192" x2="832" y2="192" stroke="#00ff00" stroke-width="3" stroke-linecap="round"/>
<line x1="832" y1="192" x2="912" y2="192" stroke="#00ff00" stroke-width="3" stroke-linecap="round"/>
<line x1="912" y1="192" x2="1008" y2="192" stroke="#00ff00" stroke-width="3" stroke-linecap="round"/>
<rect x="654.8" y="190" width="4" height="4" fill="#ffff00"/>
<rect x="670.8" y="190" width="4" height="4" fill="#ffff00"/>
<rect x="686.8" y="190" width="4" height="4" fill="#ffff00"/>
<rect x="702.8" y="190" width="4" height="4" fill="#ffff00"/>
<rect x="718.8" y="190" width="4" height="4" fill="#ffff00"/>
<rect x="749" y="190" width="4" height="4" fill="#ffff00"/>
<rect x="765" y="190" width="4" height="4" fill="#ffff00"/>
<rect x="781" y="190" width="4" height="4" fill="#ffff00"/>
<rect x="797" y="190" width="4" height="4" fill="#ffff00"/>
<rect x="813" y="190" width="4" height="4" fill="#ffff00"/>
<rect x="829" y="190" width="4" height="4" fill="#ffff00"/>
<rect x="844.1" y="190" width="4" height="4" fill="#ffff00"/>
<rect x="860.1" y="190" width="4" height="4" fill="#ffff00"/>
<rect x="876.1" y="190" width="4" height="4" fill="#ffff00"/>
<rect x="892.1" y="190" width="4" height="4" fill="#ffff00"/>
<rect x="908.1" y="190" width="4" height="4" fill="#ffff00"/>
<rect x="925" y="190" width="4" height="4" fill="#ffff00"/>
<rect x="941" y="190" width="4" height="4" fill="#ffff00"/>
<rect x="957" y="190" width="4" height="4" fill="#ffff00"/>
<rect x="973" y="190" width="4" height="4" fill="#ffff00"/>
<rect x="989" y="190" width="4" height="4" fill="#ffff00"/>
<rect x="1005" y="190" width="4" height="4" fill="#ffff00"/>
<line x1="1008" y1="192" x2="1008" y2="372" stroke="#00ff00" stroke-width="3" stroke-linecap="round"/>
<line x1="1008" y1="380" x2="1008" y2="560" stroke="#808080" stroke-width="3" stroke-linecap="round"/>
<line x1="996" y1="372" x2="1020" y2="372" stroke="#00ff00" stroke-width="3" stroke-linecap="round"/>
<line x1="996" y1="380" x2="1020" y2="380" stroke="#808080" stroke-width="3" stroke-linecap="round"/>
<rect x="1006" y="204.9" width="4" height="4" fill="#ffff00"/>
<rect x="1006" y="220.9" width="4" height="4" fill="#ffff00"/>
<rect x="1006" y="236.9" width="4" height="4" fill="#ffff00"/>
<rect x="1006" y="252.9" width="4" height="4" fill="#ffff00"/>
<rect x="1006" y="268.9" width="4" height="4" fill="#ffff00"/>
<rect x="1006" y="284.9" width="4" height="4" fill="#ffff00"/>
<rect x="1006" y="300.9" width="4" height="4" fill="#ffff00"/>
<rect x="1006" y="316.9" width="4" height="4" fill="#ffff00"/>
<rect x="1006" y="332.9" width="4" height="4" fill="#ffff00"/>
<rect x="1006" y="348.9" width="4" height="4" fill="#ffff00"/>
<rect x="1006" y="364.9" width="4" height="4" fill="#ffff00"/>
<rect x="1006" y="556.9" width="4" height="4" fill="#ffff00"/>
<rect x="1006" y="540.9" width="4" height="4" fill="#ffff00"/>
<rect x="1006" y="524.9" width="4" height="4" fill="#ffff00"/>
<rect x="1006" y="508.9" width="4" height="4" fill="#ffff00"/>
<rect x="1006" y="492.9" width="4" height="4" fill="#ffff00"/>
<rect x="1006" y="476.9" width="4" height="4" fill="#ffff00"/>
<rect x="1006" y="460.9" width="4" height="4" fill="#ffff00"/>
<rect x="1006" y="444.9" width="4" height="4" fill="#ffff00"/>
<rect x="1006" y="428.9" width="4" height="4" fill="#ffff00"/>
<rect x="1006" y="412.9" width="4" height="4" fill="#ffff00"/>
<rect x="1006" y="396.9" width="4" height="4" fill="#ffff00"/>
<rect x="1006" y="380.9" width="4" height="4" fill="#ffff00"/>
<line x1="656" y1="192" x2="656" y2="264" stroke="#00ff00" stroke-width="3" stroke-linecap="round"/>
<line x1="656" y1="296" x2="656" y2="368" stroke="#0af40a" stroke-width="3" stroke-linecap="round"/>
<linearGradient id="g454" gradientUnits="userSpaceOnUse" x1="0" y1="264" x2="0" y2="296"><stop offset="0" stop-color="#00ff00"/><stop offset="1" stop-color="#0af40a"/></linearGradient>
<rect x="650" y="264" width="12" height="32" fill="none" stroke="url(#g454)" stroke-width="3"/>
<line x1="736" y1="192" x2="736" y2="264" stroke="#00ff00" stroke-width="3" stroke-linecap="round"/>
<line x1="736" y1="296" x2="736" y2="368" stroke="#b45656" stroke-width="3" stroke-linecap="round"/>
<linearGradient id="g458" gradientUnits="userSpaceOnUse" x1="0" y1="264" x2="0" y2="296"><stop offset="0" stop-color="#00ff00"/><stop offset="1" stop-color="#b45656"/></linearGradient>
<rect x="730" y="264" width="12" height="32" fill="none" stroke="url(#g458)" stroke-width="3"/>
<line x1="832" y1="192" x2="832" y2="264" stroke="#00ff00" stroke-width="3" stroke-linecap="round"/>
<line x1="832" y1="296" x2="832" y2="368" stroke="#6e906e" stroke-width="3" stroke-linecap="round"/>
<linearGradient id="g462" gradientUnits="userSpaceOnUse" x1="0" y1="264" x2="0" y2="296"><stop offset="0" stop-color="#00ff00"/><stop offset="1" stop-color="#6e906e"/></linearGradient>
<rect x="826" y="264" width="12" height="32" fill="none" stroke="url(#g462)" stroke-width="3"/>
<line x1="912" y1="192" x2="912" y2="264" stroke="#00ff00" stroke-width="3" stroke-linecap="round"/>
<line x1="912" y1="296" x2="912" y2="368" stroke="#6e906e" stroke-width="3" stroke-linecap="round"/>
<linearGradient id="g466" gradientUnits="userSpaceOnUse" x1="0" y1="264" x2="0" y2="296"><stop offset="0" stop-color="#00ff00"/><stop offset="1" stop-color="#6e906e"/></linearGradient>
<rect x="906" y="264" width="12" height="32" fill="none" stroke="url(#g466)" stroke-width="3"/>
<rect x="654" y="201.7" width="4" height="4" fill="#ffff00"/>
<rect x="654" y="217.7" width="4" height="4" fill="#ffff00"/>
<rect x="654" y="233.7" width="4" height="4" fill="#ffff00"/>
<rect x="654" y="249.7" width="4" height="4" fill="#ffff00"/>
<rect x="654" y="265.7" width="4" height="4" fill="#ffff00"/>
<rect x="654" y="281.7" width="4" height="4" fill="#ffff00"/>
<rect x="654" y="297.7" width="4" height="4" fill="#ffff00"/>
<rect x="654" y="313.7" width="4" height="4" fill="#ffff00"/>
<rect x="654" y="329.7" width="4" height="4" fill="#ffff00"/>
<rect x="654" y="345.7" width="4" height="4" fill="#ffff00"/>
<rect x="654" y="361.7" width="4" height="4" fill="#ffff00"/>
<rect x="734" y="190.6" width="4" height="4" fill="#ffff00"/>
<rect x="734" y="206.6" width="4" height="4" fill="#ffff00"/>
<rect x="734" y="222.6" width="4" height="4" fill="#ffff00"/>
<rect x="734" y="238.6" width="4" height="4" fill="#ffff00"/>
<rect x="734" y="254.6" width="4" height="4" fill="#ffff00"/>
<rect x="734" y="270.6" width="4" height="4" fill="#ffff00"/>
<rect x="734" y="286.6" width="4" height="4" fill="#ffff00"/>
<rect x="734" y="302.6" width="4" height="4" fill="#ffff00"/>
<rect x="734" y="318.6" width="4" height="4" fill="#ffff00"/>
<rect x="734" y="334.6" width="4" height="4" fill="#ffff00"/>
<rect x="734" y="350.6" width="4" height="4" fill="#ffff00"/>
<rect x="830" y="190.6" width="4" height="4" fill="#ffff00"/>
<rect x="830" y="206.6" width="4" height="4" fill="#ffff00"/>
<rect x="830" y="222.6" width="4" height="4" fill="#ffff00"/>
<rect x="830" y="238.6" width="4" height="4" fill="#ffff00"/>
<rect x="830" y="254.6" width="4" height="4" fill="#ffff00"/>
<rect x="830" y="270.6" width="4" height="4" fill="#ffff00"/>
<rect x="830" y="286.6" width="4" height="4" fill="#ffff00"/>
<rect x="830" y="302.6" width="4" height="4" fill="#ffff00"/>
<rect x="830" y="318.6" width="4" height="4" fill="#ffff00"/>
<rect x="830" y="334.6" width="4" height="4" fill="#ffff00"/>
<rect x="830" y="350.6" width="4" height="4" fill="#ffff00"/>
<rect x="910" y="203.8" width="4" height="4" fill="#ffff00"/>
<rect x="910" y="219.8" width="4" height="4" fill="#ffff00"/>
<rect x="910" y="235.8" width="4" height="4" fill="#ffff00"/>
<rect x="910" y="251.8" width="4" height="4" fill="#ffff00"/>
<rect x="910" y="267.8" width="4" height="4" fill="#ffff00"/>
<rect x="910" y="283.8" width="4" height="4" fill="#ffff00"/>
<rect x="910" y="299.8" width="4" height="4" fill="#ffff00"/>
<rect x="910" y="315.8" width="4" height="4" fill="#ffff00"/>
<rect x="910" y="331.8" width="4" height="4" fill="#ffff00"/>
<rect x="910" y="347.8" width="4" height="4" fill="#ffff00"/>
<rect x="910" y="363.8" width="4" height="4" fill="#ffff00"/>
<line x1="736" y1="368" x2="736" y2="464" stroke="#b45656" stroke-width="3" stroke-linecap="round"/>
<line x1="832" y1="368" x2="832" y2="464" stroke="#6e906e" stroke-width="3" stroke-linecap="round"/>
<rect x="734" y="366.7" width="4" height="4" fill="#ffff00"/>
<rect x="734" y="382.7" width="4" height="4" fill="#ffff00"/>
<rect x="734" y="398.7" width="4" height="4" fill="#ffff00"/>
<rect x="734" y="414.7" width="4" height="4" fill="#ffff00"/>
<rect x="734" y="430.7" width="4" height="4" fill="#ffff00"/>
<rect x="734" y="446.7" width="4" height="4" fill="#ffff00"/>
<rect x="830" y="366.7" width="4" height="4" fill="#ffff00"/>
<rect x="830" y="382.7" width="4" height="4" fill="#ffff00"/>
<rect x="830" y="398.7" width="4" height="4" fill="#ffff00"/>
<rect x="830" y="414.7" width="4" height="4" fill="#ffff00"/>
<rect x="830" y="430.7" width="4" height="4" fill="#ffff00"/>
<rect x="830" y="446.7" width="4" height="4" fill="#ffff00"/>
<line x1="656" y1="368" x2="700" y2="368" stroke="#0af40a" stroke-width="3" stroke-linecap="round"/>
<line x1="708" y1="368" x2="752" y2="368" stroke="#6e906e" stroke-width="3" stroke-linecap="round"/>
<line x1="700" y1="380" x2="700" y2="356" stroke="#0af40a" stroke-width="3" stroke-linecap="round"/>
<line x1="708" y1="380" x2="708" y2="356" stroke="#6e906e" stroke-width="3" stroke-linecap="round"/>
<rect x="664.6" y="366" width="4" height="4" fill="#ffff00"/>
<rect x="680.6" y="366" width="4" height="4" fill="#ffff00"/>
<rect x="696.6" y="366" width="4" height="4" fill="#ffff00"/>
<rect x="744.6" y="366" width="4" height="4" fill="#ffff00"/>
<rect x="728.6" y="366" width="4" height="4" fill="#ffff00"/>
<rect x="712.6" y="366" width="4" height="4" fill="#ffff00"/>
<line x1="816" y1="368" x2="860" y2="368" stroke="#b45656" stroke-width="3" stroke-linecap="round"/>
<line x1="868" y1="368" x2="912" y2="368" stroke="#6e906e" stroke-width="3" stroke-linecap="round"/>
<line x1="860" y1="380" x2="860" y2="356" stroke="#b45656" stroke-width="3" stroke-linecap="round"/>
<line x1="868" y1="380" x2="868" y2="356" stroke="#6e906e" stroke-width="3" stroke-linecap="round"/>
<rect x="814" y="366" width="4" height="4" fill="#ffff00"/>
<rect x="830" y="366" width="4" height="4" fill="#ffff00"/>
<rect x="846" y="366" width="4" height="4" fill="#ffff00"/>
<rect x="910" y="366" width="4" height="4" fill="#ffff00"/>
<rect x="894" y="366" width="4" height="4" fill="#ffff00"/>
<rect x="878" y="366" width="4" height="4" fill="#ffff00"/>
<line x1="752" y1="368" x2="832" y2="464" stroke="#6e906e" stroke-width="3" stroke-linecap="round"/>
<rect x="756.59" y="373.91" width="4" height="4" fill="#ffff00"/>
<rect x="766.84" y="386.2" width="4" height="4" fill="#ffff00"/>
<rect x="777.08" y="398.5" width="4" height="4" fill="#ffff00"/>
<rect x="787.32" y="410.79" width="4" height="4" fill="#ffff00"/>
<rect x="797.57" y="423.08" width="4" height="4" fill="#ffff00"/>
<rect x="807.81" y="435.37" width="4" height="4" fill="#ffff00"/>
<rect x="818.05" y="447.66" width="4" height="4" fill="#ffff00"/>
<rect x="828.29" y="459.95" width="4" height="4" fill="#ffff00"/>
<line x1="736" y1="464" x2="816" y2="368" stroke="#b45656" stroke-width="3" stroke-linecap="round"/>
<rect x="742.32" y="452.01" width="4" height="4" fill="#ffff00"/>
<rect x="752.57" y="439.72" width="4" height="4" fill="#ffff00"/>
<rect x="762.81" y="427.43" width="4" height="4" fill="#ffff00"/>
<rect x="773.05" y="415.14" width="4" height="4" fill="#ffff00"/>
<rect x="783.29" y="402.85" width="4" height="4" fill="#ffff00"/>
<rect x="793.54" y="390.56" width="4" height="4" fill="#ffff00"/>
<rect x="803.78" y="378.26" width="4" height="4" fill="#ffff00"/>
<line x1="656" y1="368" x2="656" y2="448" stroke="#0af40a" stroke-width="3" stroke-linecap="round"/>
<line x1="912" y1="368" x2="912" y2="448" stroke="#6e906e" stroke-width="3" stroke-linecap="round"/>
<line x1="656" y1="480" x2="656" y2="560" stroke="#808080" stroke-width="3" stroke-linecap="round"/>
<line x1="912" y1="480" x2="912" y2="560" stroke="#808080" stroke-width="3" stroke-linecap="round"/>
<rect x="654" y="371.8" width="4" height="4" fill="#ffff00"/>
<rect x="654" y="387.8" width="4" height="4" fill="#ffff00"/>
<rect x="654" y="403.8" width="4" height="4" fill="#ffff00"/>
<rect x="654" y="419.8" width="4" height="4" fill="#ffff00"/>
<rect x="654" y="435.8" width="4" height="4" fill="#ffff00"/>
<rect x="910" y="375.7" width="4" height="4" fill="#ffff00"/>
<rect x="910" y="391.7" width="4" height="4" fill="#ffff00"/>
<rect x="910" y="407.7" width="4" height="4" fill="#ffff00"/>
<rect x="910" y="423.7" width="4" height="4" fill="#ffff00"/>
<rect x="910" y="439.7" width="4" height="4" fill="#ffff00"/>
<rect x="654" y="488.5" width="4" height="4" fill="#ffff00"/>
<rect x="654" y="504.5" width="4" height="4" fill="#ffff00"/>
<rect x="654" y="520.5" width="4" height="4" fill="#ffff00"/>
<rect x="654" y="536.5" width="4" height="4" fill="#ffff00"/>
<rect x="654" y="552.5" width="4" height="4" fill="#ffff00"/>
<rect x="910" y="478.8" width="4" height="4" fill="#ffff00"/>
<rect x="910" y="494.8" width="4" height="4" fill="#ffff00"/>
<rect x="910" y="510.8" width="4" height="4" fill="#ffff00"/>
<rect x="910" y="526.8" width="4" height="4" fill="#ffff00"/>
<rect x="910" y="542.8" width="4" height="4" fill="#ffff00"/>
<line x1="656" y1="448" x2="669" y2="458" stroke="#0af40a" stroke-width="3" stroke-linecap="round"/>
<line x1="656" y1="480" x2="669" y2="470" stroke="#808080" stroke-width="3" stroke-linecap="round"/>
<polygon points="656,480 659.9,471.95 664.78,478.29" fill="#c0c0c0"/>
<line x1="736" y1="464" x2="672" y2="464" stroke="#b45656" stroke-width="3" stroke-linecap="round"/>
<rect x="732.7" y="462" width="4" height="4" fill="#ffff00"/>
<rect x="716.7" y="462" width="4" height="4" fill="#ffff00"/>
<rect x="700.7" y="462" width="4" height="4" fill="#ffff00"/>
<rect x="684.7" y="462" width="4" height="4" fill="#ffff00"/>
<rect x="658.76" y="449.66" width="4" height="4" fill="#ffff00"/>
<rect x="657.65" y="475.19" width="4" height="4" fill="#ffff00"/>
<rect x="669" y="448" width="3" height="32" fill="#b45656"/>
<line x1="912" y1="448" x2="899" y2="458" stroke="#6e906e" stroke-width="3" stroke-linecap="round"/>
<line x1="912" y1="480" x2="899" y2="470" stroke="#808080" stroke-width="3" stroke-linecap="round"/>
<polygon points="912,480 903.22,478.29 908.1,471.95" fill="#c0c0c0"/>
<line x1="832" y1="464" x2="896" y2="464" stroke="#6e906e" stroke-width="3" stroke-linecap="round"/>
<rect x="841.7" y="462" width="4" height="4" fill="#ffff00"/>
<rect x="857.7" y="462" width="4" height="4" fill="#ffff00"/>
<rect x="873.7" y="462" width="4" height="4" fill="#ffff00"/>
<rect x="889.7" y="462" width="4" height="4" fill="#ffff00"/>
<rect x="901.44" y="452.59" width="4" height="4" fill="#ffff00"/>
<rect x="897.95" y="468.73" width="4" height="4" fill="#ffff00"/>
<rect x="896" y="448" width="3" height="32" fill="#6e906e"/>
<line x1="912" y1="368" x2="944" y2="368" stroke="#6e906e" stroke-width="3" stroke-linecap="round"/>
<line x1="1120" y1="48" x2="1120" y2="96" stroke="#808080" stroke-width="3" stroke-linecap="round"/>
<line x1="1120" y1="128" x2="1120" y2="176" stroke="#808080" stroke-width="3" stroke-linecap="round"/>
<path d="M1120 96 A5.33 5.33 0 0 1 1120 106.67 A5.33 5.33 0 0 1 1120 117.33 A5.33 5.33 0 0 1 1120 128" fill="none" stroke="#808080" stroke-width="3" stroke-linecap="round"/>
<line x1="1184" y1="48" x2="1184" y2="96" stroke="#808080" stroke-width="3" stroke-linecap="round"/>
<line x1="1184" y1="128" x2="1184" y2="176" stroke="#808080" stroke-width="3" stroke-linecap="round"/>
<path d="M1184 96 A5.33 5.33 0 0 1 1184 106.67 A5.33 5.33 0 0 1 1184 117.33 A5.33 5.33 0 0 1 1184 128" fill="none" stroke="#808080" stroke-width="3" stroke-linecap="round"/>
<circle cx="1120" cy="48" r="3" fill="#fff"/>
<circle cx="1120" cy="176" r="3" fill="#fff"/>
<circle cx="1184" cy="48" r="3" fill="#fff"/>
<circle cx="1184" cy="176" r="3" fill="#fff"/>
<circle cx="80" cy="0" r="3" fill="#fff"/>
<circle cx="80" cy="192" r="3" fill="#fff"/>
<circle cx="176" cy="192" r="3" fill="#fff"/>
<circle cx="256" cy="192" r="3" fill="#fff"/>
<circle cx="352" cy="192" r="3" fill="#fff"/>
<circle cx="176" cy="368" r="3" fill="#fff"/>
<circle cx="432" cy="368" r="3" fill="#fff"/>
<circle cx="256" cy="464" r="3" fill="#fff"/>
<circle cx="352" cy="464" r="3" fill="#fff"/>
<circle cx="80" cy="560" r="3" fill="#fff"/>
<circle cx="176" cy="560" r="3" fill="#fff"/>
<circle cx="432" cy="560" r="3" fill="#fff"/>
<circle cx="656" cy="560" r="3" fill="#fff"/>
<circle cx="912" cy="560" r="3" fill="#fff"/>
<circle cx="656" cy="192" r="3" fill="#fff"/>
<circle cx="736" cy="192" r="3" fill="#fff"/>
<circle cx="832" cy="192" r="3" fill="#fff"/>
<circle cx="912" cy="192" r="3" fill="#fff"/>
<circle cx="656" cy="368" r="3" fill="#fff"/>
<circle cx="912" cy="368" r="3" fill="#fff"/>
<circle cx="736" cy="464" r="3" fill="#fff"/>
<circle cx="832" cy="464" r="3" fill="#fff"/>
<g fill="#fff" font-family="'Liberation Sans',sans-serif">
<text x="90" y="142" font-size="12" text-anchor="start">100</text>
<text x="666" y="142" font-size="12" text-anchor="start">100</text>
<text x="94" y="382" font-size="12" text-anchor="start">1mF</text>
<text x="186" y="286" font-size="12" text-anchor="start">1k</text>
<text x="266" y="286" font-size="12" text-anchor="start">100k</text>
<text x="362" y="286" font-size="12" text-anchor="start">100k</text>
<text x="442" y="286" font-size="12" text-anchor="start">1k</text>
<text x="224" y="354" font-size="12" text-anchor="middle">1μF</text>
<text x="384" y="354" font-size="12" text-anchor="middle">1μF</text>
<text x="538" y="371" font-size="14" text-anchor="middle">TP</text>
<text x="538" y="386" font-size="14" text-anchor="middle">669.727 mV</text>
<text x="1022" y="382" font-size="12" text-anchor="start">1mF</text>
<text x="666" y="286" font-size="12" text-anchor="start">1k</text>
<text x="746" y="286" font-size="12" text-anchor="start">100k</text>
<text x="842" y="286" font-size="12" text-anchor="start">100k</text>
<text x="922" y="286" font-size="12" text-anchor="start">1k</text>
<text x="704" y="354" font-size="12" text-anchor="middle">2μF</text>
<text x="864" y="354" font-size="12" text-anchor="middle">2μF</text>
<text x="985.5" y="371" font-size="14" text-anchor="middle">TP</text>
<text x="985.5" y="386" font-size="14" text-anchor="middle">655.891 mV</text>
<text x="1130" y="118" font-size="12" text-anchor="start">10mH</text>
<text x="1194" y="118" font-size="12" text-anchor="start">10mH</text>
</g></g>
</svg></div>
<div id="side">
<div class="btn" style="left:5px;width:50px">Reset</div>
<div class="btn" style="left:60px;width:82px"><b>RUN</b>&nbsp;/&nbsp;Stop</div>
<div class="lbl" style="top:49px">Simulation Speed</div>
<div class="lbl" style="top:93px">Current Speed</div>
<div class="lbl" style="top:137px;color:#d3d3d3">Power Brightness</div>
<div class="lbl" style="top:181px">Current Circuit:</div>
<svg width="163" height="828" viewBox="1062 33 163 828">
<path d="M1075 97 L1064 104 L1075 111 M1215 97 L1225.5 104 L1215 111" fill="none" stroke="#000" stroke-width="1"/>
<rect x="1081" y="101.5" width="128" height="5" fill="#808080"/>
<rect x="1081" y="101.5" width="125" height="5" fill="#ff0000"/>
<rect x="1207" y="99" width="5" height="10" fill="#fff" stroke="#000" stroke-width="2"/>
<path d="M1075 141 L1064 148 L1075 155 M1215 141 L1225.5 148 L1215 155" fill="none" stroke="#000" stroke-width="1"/>
<rect x="1081" y="145.5" width="128" height="5" fill="#808080"/>
<rect x="1081" y="145.5" width="61" height="5" fill="#ff0000"/>
<rect x="1143" y="143" width="5" height="10" fill="#fff" stroke="#000" stroke-width="2"/>
<path d="M1075 185 L1064 192 L1075 199 M1215 185 L1225.5 192 L1215 199" fill="none" stroke="#d3d3d3" stroke-width="1"/>
<rect x="1081" y="189.5" width="128" height="5" fill="#d3d3d3"/>
</svg>
</div>
</body></html>
